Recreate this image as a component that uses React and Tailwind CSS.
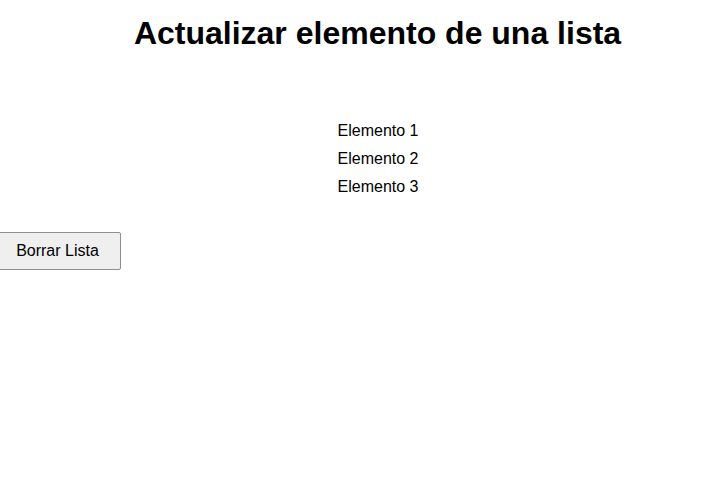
export default function App() {
  const items = ['Elemento 1', 'Elemento 2', 'Elemento 3'];
  return (
    <div className="min-h-screen bg-white text-black font-['Liberation_Sans',Arial,sans-serif]">
      <h1 className="pt-[14px] pl-[54px] text-center text-[32px] font-bold leading-[38px]">
        Actualizar elemento de una lista
      </h1>
      <ul className="mt-[65px] pl-[55px] flex flex-col items-center">
        {items.map((item) => (
          <li key={item} className="text-[16px] leading-[28px]">{item}</li>
        ))}
      </ul>
      <button className="mt-[31px] -ml-[6px] h-[38px] w-[127px] rounded-[2px] border border-[#8f8f8f] bg-[#efefef] text-[16px]">
        Borrar Lista
      </button>
    </div>
  );
}
